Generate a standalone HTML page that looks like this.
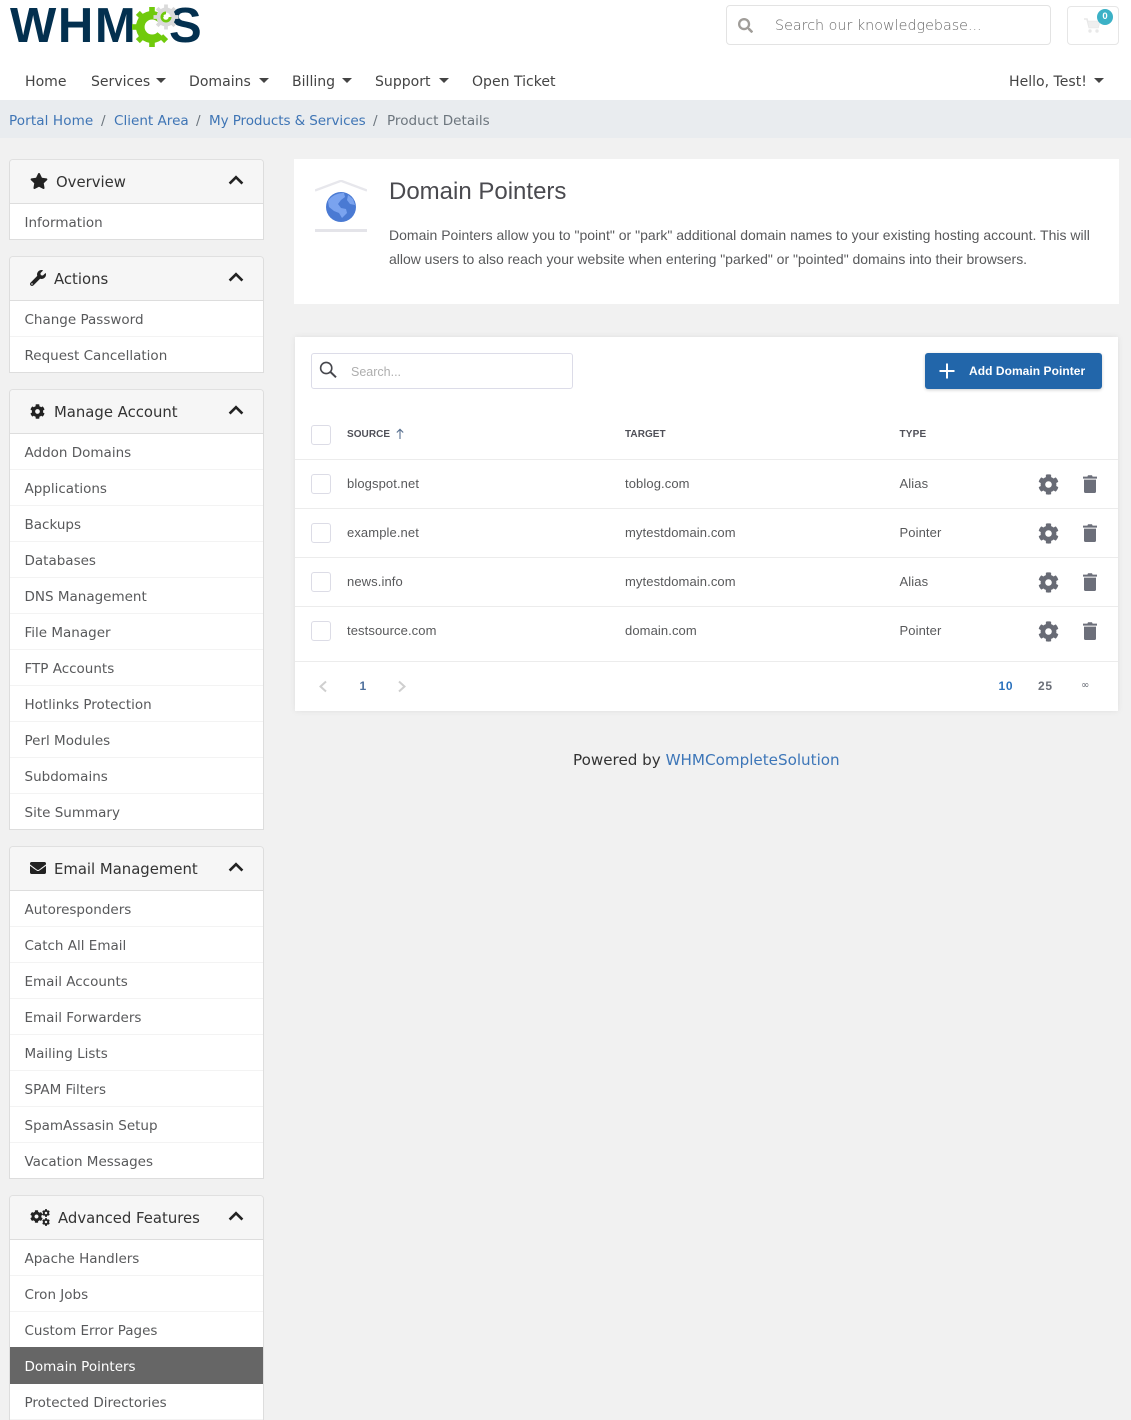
<!DOCTYPE html>
<html lang="en"><head><meta charset="utf-8"><title>Domain Pointers</title>
<style>
*{box-sizing:border-box}
html,body{margin:0;padding:0;height:1420px;overflow:hidden}
body{width:1131px;background:#f1f1f1;position:relative;font-family:"DejaVu Sans",sans-serif;color:#58595b}
.a{position:absolute;white-space:nowrap}
a{text-decoration:none;color:inherit}
svg{display:block}
header{position:absolute;left:0;top:0;width:1131px;height:100px;background:#fff}
.nav{top:71px;height:22px;line-height:22px;font-size:14.05px;color:#444}
.caret{position:absolute;top:78px;width:0;height:0;border-left:5px solid transparent;border-right:5px solid transparent;border-top:5px solid #444}
.bc{position:absolute;left:0;top:100px;width:1131px;height:38px;background:#e9ecef}
.bc .a{top:10px;height:22px;line-height:22px;font-size:13.55px;color:#3f75b5}
.panel{position:absolute;left:9px;width:255px;background:#fff;border:1px solid #ddd;border-top-color:#e0e0e0;border-radius:4px 4px 0 0;overflow:hidden}
.ph{height:44px;background:#f6f6f6;border-bottom:1px solid #ddd;position:relative;color:#333}
.ph .t{position:absolute;top:11px;line-height:22px;font-size:14.85px;white-space:nowrap;color:#333}
.ph svg.i{position:absolute}
.ph svg.c{position:absolute;left:218px;top:15px}
.it{height:36px;line-height:38px;padding-left:14.5px;font-size:13.5px;color:#58595b;border-bottom:1px solid #f3f3f3;white-space:nowrap}
.it:last-child{border-bottom:0;height:35px}
.it.on{background:#666;color:#fff;height:37px;margin-top:-1px;line-height:41px;border:0}
.card{position:absolute;background:#fff}
.r{font-family:"Liberation Sans",sans-serif}
.td{font-size:13px;letter-spacing:.1px;color:#58595b;line-height:18px;height:18px}
.th{font-size:10px;font-weight:bold;color:#4f5058;line-height:14px;height:14px;letter-spacing:.05px}
.cb{position:absolute;left:311px;width:20px;height:20px;border:1px solid #dcdce6;border-radius:3px;background:#fff}
.ln{position:absolute;left:295px;width:823px;height:1px;background:#ececec}
</style></head><body>
<svg width="0" height="0" style="position:absolute"><defs>
<symbol id="cog" viewBox="0 0 512 512"><path fill="currentColor" d="M487.4 315.7l-42.6-24.6c4.3-23.2 4.3-47 0-70.2l42.6-24.6c4.9-2.8 7.1-8.6 5.5-14-11.1-35.6-30-67.8-54.7-94.6-3.8-4.1-10-5.1-14.8-2.3L380.8 110c-17.9-15.4-38.5-27.3-60.8-35.1V25.8c0-5.6-3.9-10.5-9.4-11.7-36.7-8.2-74.3-7.8-109.2 0-5.5 1.2-9.4 6.1-9.4 11.7V75c-22.2 7.9-42.8 19.8-60.8 35.1L88.7 85.5c-4.9-2.8-11-1.9-14.8 2.3-24.7 26.7-43.6 58.9-54.7 94.6-1.7 5.4.6 11.2 5.5 14L67.3 221c-4.3 23.2-4.3 47 0 70.2l-42.6 24.6c-4.9 2.8-7.1 8.6-5.5 14 11.1 35.6 30 67.8 54.7 94.6 3.8 4.1 10 5.1 14.8 2.3l42.6-24.6c17.9 15.4 38.5 27.3 60.8 35.1v49.2c0 5.6 3.9 10.5 9.4 11.7 36.7 8.2 74.3 7.8 109.2 0 5.5-1.2 9.4-6.1 9.4-11.7v-49.2c22.2-7.9 42.8-19.8 60.8-35.1l42.6 24.6c4.9 2.8 11 1.9 14.8-2.3 24.7-26.7 43.6-58.9 54.7-94.6 1.5-5.5-.7-11.3-5.6-14.1zM256 336c-44.1 0-80-35.9-80-80s35.9-80 80-80 80 35.9 80 80-35.9 80-80 80z"/></symbol>
<symbol id="search" viewBox="0 0 512 512"><path fill="currentColor" d="M505 442.7L405.3 343c-4.5-4.5-10.6-7-17-7H372c27.6-35.3 44-79.7 44-128C416 93.1 322.9 0 208 0S0 93.1 0 208s93.1 208 208 208c48.3 0 92.7-16.4 128-44v16.3c0 6.4 2.5 12.5 7 17l99.7 99.7c9.4 9.4 24.6 9.4 33.9 0l28.3-28.3c9.4-9.4 9.4-24.6.1-34zM208 336c-70.7 0-128-57.2-128-128 0-70.7 57.2-128 128-128 70.7 0 128 57.2 128 128 0 70.7-57.2 128-128 128z"/></symbol>
<symbol id="trash" viewBox="0 0 14 18"><path fill="currentColor" d="M0 1.6h4.4L5 .3h4l.6 1.3H14v2H0zM1 4.6h12V16.6c0 .8-.6 1.4-1.4 1.4H2.4C1.6 18 1 17.4 1 16.6z"/></symbol>
<symbol id="up" viewBox="0 0 16 10"><path fill="none" stroke="#222" stroke-width="2.6" d="M1.6 8.6 8 2.2l6.4 6.4"/></symbol>
<g id="gt"><rect x="-2.8" y="-20" width="5.6" height="7"/></g>
<g id="ht"><rect x="-1.9" y="-12.5" width="3.8" height="4.5"/></g>
</defs></svg>

<header>
<div class="a r" style="left:10px;top:-2px;font-size:49px;line-height:56px;font-weight:bold;color:#03304f;letter-spacing:1.6px">WHM</div>
<div class="a r" style="left:169px;top:-2px;font-size:49px;line-height:56px;font-weight:bold;color:#03304f">S</div>
<svg class="a" style="left:130px;top:0" width="60" height="50" viewBox="0 0 60 50">
<g transform="translate(22,27)" fill="#70ca0c">
<path d="M12 -10.5A16 16 0 1 0 12 10.5L5.5 5.2A7.5 7.5 0 1 1 5.5 -5.2Z"/>
<use href="#gt"/>
<use href="#gt" transform="rotate(-45)"/>
<use href="#gt" transform="rotate(-90)"/>
<use href="#gt" transform="rotate(-135)"/>
<use href="#gt" transform="rotate(180)"/>
<use href="#gt" transform="rotate(135)"/>
</g>
<g transform="translate(36,17)" fill="#dadada">
<path fill-rule="evenodd" d="M0-9.500A9.500 9.500 0 1 1 0 9.500A9.500 9.500 0 1 1 0-9.500ZM0-4.500A4.500 4.500 0 1 0 0 4.500A4.500 4.500 0 1 0 0-4.500Z"/>
<use href="#ht"/><use href="#ht" transform="rotate(45)"/><use href="#ht" transform="rotate(90)"/><use href="#ht" transform="rotate(135)"/><use href="#ht" transform="rotate(180)"/><use href="#ht" transform="rotate(225)"/><use href="#ht" transform="rotate(270)"/><use href="#ht" transform="rotate(315)"/>
</g>
<path d="M36 11.500a5.500 5.500 0 1 0 5.500 5.500l-2.800 0a2.800 2.800 0 1 1-2.700-2.800z" fill="#70ca0c"/>
</svg>

<div class="a" style="left:726px;top:5px;width:325px;height:40px;border:1px solid #e3e3e3;border-radius:4px;background:#fff"></div>
<svg class="a" style="left:738px;top:18px;color:#a09d99" width="15" height="15"><use href="#search"/></svg>
<div class="a" style="left:775px;top:15px;height:22px;line-height:22px;font-size:14.3px;color:#6a6a6a;font-weight:200">Search our knowledgebase...</div>
<div class="a" style="left:1067px;top:6px;width:52px;height:39px;border:1px solid #e6e6e6;border-radius:4px;background:#fff"></div>
<svg class="a" style="left:1084px;top:18px" width="17" height="15" viewBox="0 0 17 15"><path fill="none" stroke="#e8e8e8" stroke-width="1.6" d="M0 1h3l2.200 8.500H14L15.500 3.500H4"/><circle cx="6" cy="13" r="1.700" fill="#e8e8e8"/><circle cx="13" cy="13" r="1.700" fill="#e8e8e8"/><path fill="#efefef" d="M4 3.500h11.500L14 9.500H5.200z"/></svg>
<div class="a" style="left:1097px;top:9px;width:16px;height:16px;border-radius:50%;background:#3cb1c6;color:#fff;font:bold 9.5px/16px 'Liberation Sans',sans-serif;text-align:center">0</div>

<nav>
<a class="a nav" style="left:25px">Home</a>
<a class="a nav" style="left:91px">Services</a><i class="caret" style="left:155.5px"></i>
<a class="a nav" style="left:189px">Domains</a><i class="caret" style="left:258.5px"></i>
<a class="a nav" style="left:292px">Billing</a><i class="caret" style="left:341.5px"></i>
<a class="a nav" style="left:375px">Support</a><i class="caret" style="left:438.5px"></i>
<a class="a nav" style="left:472px">Open Ticket</a>
<a class="a nav" style="left:1009px">Hello, Test!</a><i class="caret" style="left:1093.5px"></i>
</nav>
</header>

<div class="bc">
<a class="a" style="left:9px;letter-spacing:.1px">Portal Home</a><span class="a" style="left:101px;color:#6c757d">/</span>
<a class="a" style="left:114px">Client Area</a><span class="a" style="left:196px;color:#6c757d">/</span>
<a class="a" style="left:209px;letter-spacing:-.1px">My Products &amp; Services</a><span class="a" style="left:373px;color:#6c757d">/</span>
<span class="a" style="left:387px;color:#6c757d">Product Details</span>
</div>

<aside>
<div class="panel" style="top:159px;height:81px">
<div class="ph"><svg class="i" style="left:20px;top:13px" width="18" height="16" viewBox="0 0 576 512"><path fill="#222" d="M259.3 17.8L194 150.2 47.9 171.5c-26.2 3.8-36.7 36.1-17.7 54.6l105.7 103-25 145.5c-4.5 26.3 23.2 46 46.4 33.7L288 439.6l130.7 68.7c23.2 12.2 50.9-7.4 46.4-33.7l-25-145.5 105.7-103c19-18.5 8.5-50.8-17.7-54.6L382 150.2 316.7 17.8c-11.7-23.6-45.6-23.9-57.4 0z"/></svg><span class="t" style="left:46px">Overview</span><svg class="c" width="16" height="10"><use href="#up"/></svg></div>
<div class="it">Information</div>
</div>

<div class="panel" style="top:256px;height:117px">
<div class="ph"><svg class="i" style="left:20px;top:13px" width="16" height="16" viewBox="0 0 512 512"><path fill="#222" d="M507.73 109.1c-2.24-9.03-13.54-12.09-20.12-5.51l-74.36 74.36-67.88-11.31-11.31-67.88 74.36-74.36c6.62-6.62 3.43-17.9-5.66-20.16-47.38-11.74-99.55.91-136.58 37.93-39.64 39.64-50.55 97.1-34.05 147.2L18.74 402.76c-24.99 24.99-24.99 65.51 0 90.5 24.99 24.99 65.51 24.99 90.5 0l213.21-213.21c50.12 16.71 107.47 5.68 147.37-34.22 37.07-37.07 49.7-89.32 37.91-136.73zM64 472c-13.25 0-24-10.75-24-24 0-13.26 10.75-24 24-24s24 10.74 24 24c0 13.25-10.75 24-24 24z"/></svg><span class="t" style="left:44px">Actions</span><svg class="c" width="16" height="10"><use href="#up"/></svg></div>
<div class="it">Change Password</div><div class="it">Request Cancellation</div>
</div>

<div class="panel" style="top:389px;height:441px">
<div class="ph"><svg class="i" style="left:20px;top:14px;color:#222" width="15" height="15"><use href="#cog"/></svg><span class="t" style="left:44px">Manage Account</span><svg class="c" width="16" height="10"><use href="#up"/></svg></div>
<div class="it">Addon Domains</div><div class="it">Applications</div><div class="it">Backups</div><div class="it">Databases</div><div class="it">DNS Management</div><div class="it">File Manager</div><div class="it">FTP Accounts</div><div class="it">Hotlinks Protection</div><div class="it">Perl Modules</div><div class="it">Subdomains</div><div class="it">Site Summary</div>
</div>

<div class="panel" style="top:846px;height:333px">
<div class="ph"><svg class="i" style="left:20px;top:13px" width="16" height="16" viewBox="0 0 512 512"><path fill="#222" d="M502.3 190.8c3.9-3.1 9.7-.2 9.7 4.7V400c0 26.5-21.5 48-48 48H48c-26.5 0-48-21.5-48-48V195.6c0-5 5.7-7.8 9.7-4.7 22.4 17.4 52.1 39.5 154.1 113.6 21.1 15.4 56.7 47.8 92.2 47.6 35.7.3 72-32.8 92.3-47.6 102-74.1 131.6-96.3 154-113.7zM256 320c23.2.4 56.6-29.2 73.4-41.4 132.7-96.3 142.8-104.7 173.4-128.7 5.8-4.5 9.2-11.5 9.2-18.9v-19c0-26.5-21.5-48-48-48H48C21.5 64 0 85.5 0 112v19c0 7.4 3.4 14.3 9.2 18.9 30.6 23.9 40.7 32.4 173.4 128.7 16.8 12.2 50.2 41.8 73.4 41.4z"/></svg><span class="t" style="left:44px">Email Management</span><svg class="c" width="16" height="10"><use href="#up"/></svg></div>
<div class="it">Autoresponders</div><div class="it">Catch All Email</div><div class="it">Email Accounts</div><div class="it">Email Forwarders</div><div class="it">Mailing Lists</div><div class="it">SPAM Filters</div><div class="it">SpamAssasin Setup</div><div class="it">Vacation Messages</div>
</div>

<div class="panel" style="top:1195px;height:240px;border-bottom:0">
<div class="ph"><svg class="i" style="left:20px;top:14px;color:#222" width="13" height="13"><use href="#cog"/></svg><svg class="i" style="left:32px;top:13px;color:#222" width="8" height="8"><use href="#cog"/></svg><svg class="i" style="left:32px;top:22px;color:#222" width="8" height="8"><use href="#cog"/></svg><span class="t" style="left:48px">Advanced Features</span><svg class="c" width="16" height="10"><use href="#up"/></svg></div>
<div class="it">Apache Handlers</div><div class="it">Cron Jobs</div><div class="it">Custom Error Pages</div><div class="it on">Domain Pointers</div><div class="it" style="height:36px;border-bottom:1px solid #f3f3f3">Protected Directories</div>
</div>
</aside>

<main class="r">
<section class="card" style="left:294px;top:159px;width:825px;height:145px"></section>
<svg class="a" style="left:315px;top:180px" width="52" height="53" viewBox="0 0 52 53">
<path d="M0 10.500 26 .8 52 10.500" fill="none" stroke="#e7e7ec" stroke-width="2.4"/>
<rect x="0" y="49" width="52" height="3" fill="#e4e4e9"/>
<circle cx="26" cy="27" r="15" fill="#4a7ad3"/>
<path d="M13 21c4-6 10-8 16-8l1 4-4 3-3 4 3 4 5 1 1 4-5 5-3-5-5-2-5-4z" fill="#7aa3ef"/>
<path d="M33 15l5 4 2 6-5-1-3-4z" fill="#7aa3ef"/>
</svg>
<h1 class="a" style="left:389px;top:177px;margin:0;font-size:24px;line-height:30px;font-weight:400;color:#4a4a4f">Domain Pointers</h1>
<div class="a" style="left:389px;top:225px;font-size:14px;line-height:20px;color:#58595b;letter-spacing:.01px">Domain Pointers allow you to "point" or "park" additional domain names to your existing hosting account. This will</div>
<div class="a" style="left:389px;top:249px;font-size:14px;line-height:20px;color:#58595b;letter-spacing:-.02px">allow users to also reach your website when entering "parked" or "pointed" domains into their browsers.</div>

<section class="card" style="left:295px;top:337px;width:823px;height:374px;box-shadow:0 0 6px rgba(0,0,0,.08)"></section>
<div class="a" style="left:311px;top:353px;width:262px;height:36px;border:1px solid #dcdce8;border-radius:3px;background:#fff"></div>
<svg class="a" style="left:319px;top:361px" width="19" height="18" viewBox="0 0 19 18"><circle cx="7.2" cy="7" r="5.6" fill="none" stroke="#46474d" stroke-width="1.6"/><path d="M11.5 11 17 16.3" stroke="#46474d" stroke-width="2"/></svg>
<div class="a" style="left:351px;top:364px;font-size:12.5px;line-height:16px;color:#aeaeae">Search...</div>
<div class="a" style="left:925px;top:353px;width:177px;height:36px;background:#2266aa;border-radius:3px;box-shadow:0 1px 3px rgba(0,0,0,.2)"></div>
<svg class="a" style="left:939px;top:363px" width="16" height="16"><path d="M8 .5v15M.5 8h15" stroke="#fff" stroke-width="2"/></svg>
<div class="a" style="left:969px;top:362px;font-size:12px;line-height:18px;font-weight:bold;color:#fff;letter-spacing:.05px">Add Domain Pointer</div>

<div class="cb" style="top:425px"></div>
<div class="a th" style="left:347px;top:428px">SOURCE</div>
<svg class="a" style="left:395px;top:428px" width="10" height="12"><path d="M5 11V1.5M1.8 4.5 5 1.3l3.2 3.2" fill="none" stroke="#58708f" stroke-width="1.1"/></svg>
<div class="a th" style="left:625px;top:428px">TARGET</div>
<div class="a th" style="left:899.5px;top:428px;letter-spacing:.2px">TYPE</div>
<div class="ln" style="top:459px"></div>

<div class="cb" style="top:474px"></div>
<div class="a td" style="left:347px;top:475px">blogspot.net</div><div class="a td" style="left:625px;top:475px">toblog.com</div><div class="a td" style="left:899.5px;top:475px">Alias</div>
<svg class="a" style="left:1038px;top:474px;color:#686b75" width="21" height="21"><use href="#cog"/></svg><svg class="a" style="left:1083px;top:475px;color:#6c6f7a" width="14" height="18"><use href="#trash"/></svg>
<div class="ln" style="top:508px"></div>

<div class="cb" style="top:523px"></div>
<div class="a td" style="left:347px;top:524px">example.net</div><div class="a td" style="left:625px;top:524px">mytestdomain.com</div><div class="a td" style="left:899.5px;top:524px">Pointer</div>
<svg class="a" style="left:1038px;top:523px;color:#686b75" width="21" height="21"><use href="#cog"/></svg><svg class="a" style="left:1083px;top:524px;color:#6c6f7a" width="14" height="18"><use href="#trash"/></svg>
<div class="ln" style="top:557px"></div>

<div class="cb" style="top:572px"></div>
<div class="a td" style="left:347px;top:573px">news.info</div><div class="a td" style="left:625px;top:573px">mytestdomain.com</div><div class="a td" style="left:899.5px;top:573px">Alias</div>
<svg class="a" style="left:1038px;top:572px;color:#686b75" width="21" height="21"><use href="#cog"/></svg><svg class="a" style="left:1083px;top:573px;color:#6c6f7a" width="14" height="18"><use href="#trash"/></svg>
<div class="ln" style="top:606px"></div>

<div class="cb" style="top:621px"></div>
<div class="a td" style="left:347px;top:622px">testsource.com</div><div class="a td" style="left:625px;top:622px">domain.com</div><div class="a td" style="left:899.5px;top:622px">Pointer</div>
<svg class="a" style="left:1038px;top:621px;color:#686b75" width="21" height="21"><use href="#cog"/></svg><svg class="a" style="left:1083px;top:622px;color:#6c6f7a" width="14" height="18"><use href="#trash"/></svg>
<div class="ln" style="top:661px"></div>

<svg class="a" style="left:318px;top:680px" width="10" height="13"><path d="M8 1.5 2.5 6.500 8 11.500" fill="none" stroke="#cfcfcf" stroke-width="2"/></svg>
<div class="a" style="left:359.5px;top:678px;font-size:12px;line-height:16px;font-weight:bold;color:#4d6f9c">1</div>
<svg class="a" style="left:397px;top:680px" width="10" height="13"><path d="M2 1.500 7.500 6.500 2 11.500" fill="none" stroke="#cfcfcf" stroke-width="2"/></svg>
<div class="a" style="left:998.5px;top:678px;font-size:12px;line-height:16px;font-weight:bold;color:#2b72bd;letter-spacing:.7px">10</div>
<div class="a" style="left:1038px;top:678px;font-size:12px;line-height:16px;font-weight:bold;color:#6b6f78;letter-spacing:.7px">25</div>
<div class="a" style="left:1081px;top:678px;font-size:10px;line-height:15px;color:#6b6f78;font-family:'DejaVu Sans',sans-serif">∞</div>
</main>

<footer class="a" style="left:573px;top:749px;font-size:15.15px;line-height:22px;color:#333">Powered by <a style="color:#3d76b8">WHMCompleteSolution</a></footer>
</body></html>
